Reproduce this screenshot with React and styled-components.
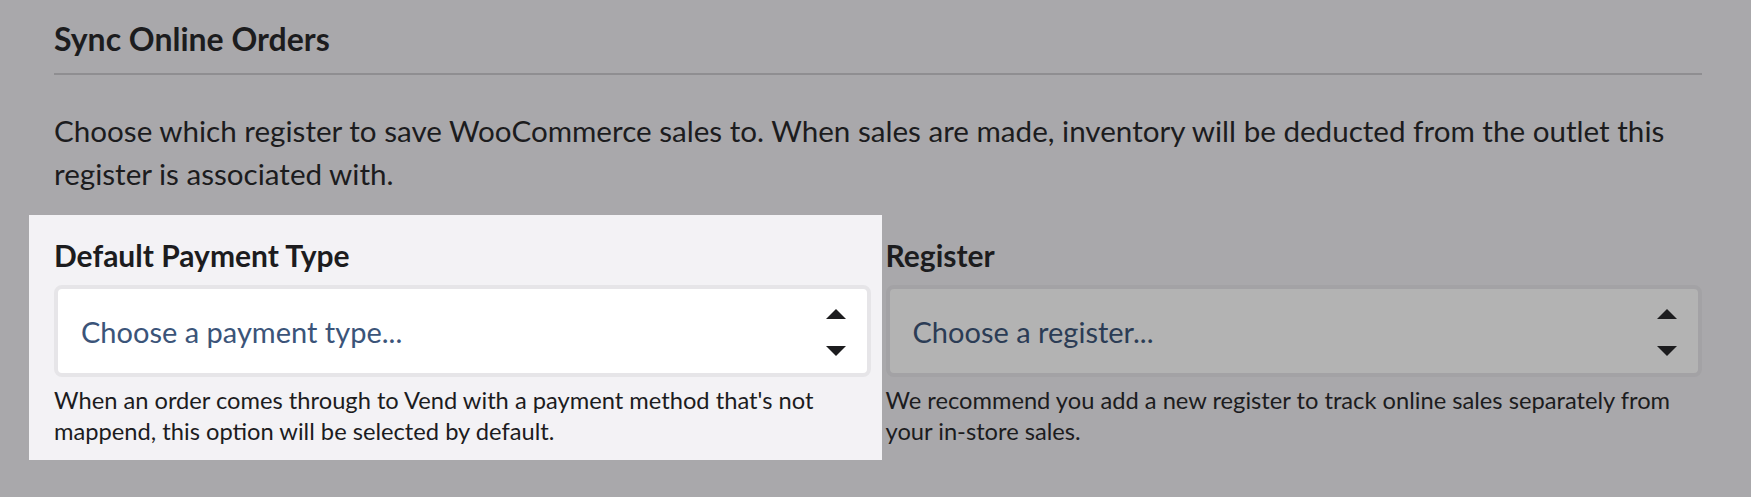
import React from 'react';
import styled, { createGlobalStyle } from 'styled-components';

const GlobalStyle = createGlobalStyle`
  html, body {
    margin: 0;
    padding: 0;
    background: #a9a8ab;
  }
  body {
    font-family: Lato, "Noto Sans", "Liberation Sans", sans-serif;
    color: #1c1c1e;
  }
`;

const Page = styled.div`
  padding: 21px 49px 0 54px;
`;

const Title = styled.h2`
  margin: 0;
  font-size: 32px;
  line-height: 36px;
  font-weight: 700;
`;

const Divider = styled.hr`
  margin: 16px 0 0;
  border: 0;
  height: 2px;
  background: #8f8e91;
`;

const Intro = styled.p`
  margin: 34px 0 0;
  font-size: 29.6px;
  line-height: 43px;
  font-weight: 400;
`;

const Fields = styled.div`
  display: grid;
  grid-template-columns: 1fr 1fr;
  column-gap: 15px;
  align-items: start;
  margin-top: 43px;
`;

const Field = styled.div`
  display: flex;
  flex-direction: column;
  ${({ $highlighted }) =>
    $highlighted &&
    `
    background: #f3f2f5;
    margin: -23px -11px 0 -25px;
    padding: 23px 11px 13px 25px;
  `}
`;

const Label = styled.label`
  font-size: 30px;
  line-height: 34px;
  font-weight: 700;
`;

const Select = styled.div`
  margin-top: 13px;
  height: 92px;
  box-sizing: border-box;
  border: 4px solid ${({ $dim }) => ($dim ? '#a3a2a5' : '#e6e5e8')};
  border-radius: 8px;
  background: ${({ $dim }) => ($dim ? '#b3b3b3' : '#ffffff')};
  display: flex;
  align-items: center;
  justify-content: space-between;
  padding: 0 21px 0 23px;
  cursor: pointer;
`;

const Placeholder = styled.span`
  font-size: 29px;
  color: ${({ $dim }) => ($dim ? '#2b3c55' : '#3b5479')};
`;

const Help = styled.p`
  margin: 8px 0 0;
  font-size: 23.7px;
  line-height: 31px;
`;

const ArrowIcon = styled.svg`
  flex: none;
  margin-top: 3px;
`;

const Arrows = () => (
  <ArrowIcon width="20" height="47" viewBox="0 0 20 47" aria-hidden="true">
    <polygon points="10,0 20,10 0,10" fill="#1c1c1e" />
    <polygon points="0,37 20,37 10,47" fill="#1c1c1e" />
  </ArrowIcon>
);

export default function App() {
  return (
    <>
      <GlobalStyle />
      <Page>
        <Title>Sync Online Orders</Title>
        <Divider />
        <Intro>
          Choose which register to save WooCommerce sales to. When sales are made, inventory will be
          deducted from the outlet this register is associated with.
        </Intro>
        <Fields>
          <Field $highlighted>
            <Label>Default Payment Type</Label>
            <Select>
              <Placeholder>Choose a payment type...</Placeholder>
              <Arrows />
            </Select>
            <Help>
              When an order comes through to Vend with a payment method that's not mappend, this
              option will be selected by default.
            </Help>
          </Field>
          <Field>
            <Label>Register</Label>
            <Select $dim>
              <Placeholder $dim>Choose a register...</Placeholder>
              <Arrows />
            </Select>
            <Help>
              We recommend you add a new register to track online sales separately from your
              in-store sales.
            </Help>
          </Field>
        </Fields>
      </Page>
    </>
  );
}
